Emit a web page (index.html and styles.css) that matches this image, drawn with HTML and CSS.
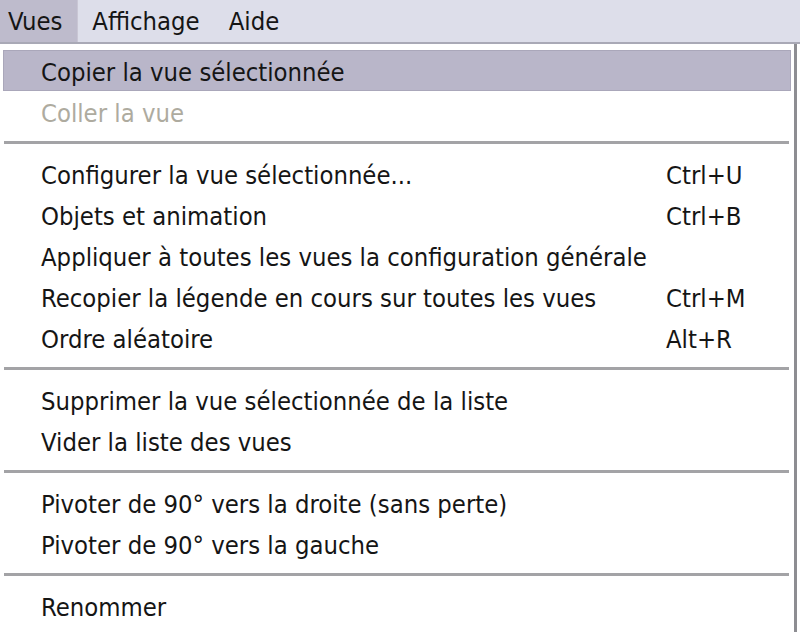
FILE: index.html
```html
<!DOCTYPE html>
<html lang="fr">
<head>
    <meta charset="UTF-8">
    <title>Menu Vues</title>
    <link rel="stylesheet" href="styles.css">
</head>
<body>
    <div class="menubar">
        <span class="menubar-item active">Vues</span>
        <span class="menubar-item">Affichage</span>
        <span class="menubar-item">Aide</span>
    </div>

    <div class="menu">
        <div class="menu-item selected"><span>Copier la vue sélectionnée</span><span class="shortcut"></span></div>
        <div class="menu-item disabled"><span>Coller la vue</span><span class="shortcut"></span></div>
        <div class="separator"></div>
        <div class="menu-item"><span>Configurer la vue sélectionnée...</span><span class="shortcut">Ctrl+U</span></div>
        <div class="menu-item"><span>Objets et animation</span><span class="shortcut">Ctrl+B</span></div>
        <div class="menu-item"><span>Appliquer à toutes les vues la configuration générale</span><span class="shortcut"></span></div>
        <div class="menu-item"><span>Recopier la légende en cours sur toutes les vues</span><span class="shortcut">Ctrl+M</span></div>
        <div class="menu-item"><span>Ordre aléatoire</span><span class="shortcut">Alt+R</span></div>
        <div class="separator"></div>
        <div class="menu-item"><span>Supprimer la vue sélectionnée de la liste</span><span class="shortcut"></span></div>
        <div class="menu-item"><span>Vider la liste des vues</span><span class="shortcut"></span></div>
        <div class="separator"></div>
        <div class="menu-item"><span>Pivoter de 90° vers la droite (sans perte)</span><span class="shortcut"></span></div>
        <div class="menu-item"><span>Pivoter de 90° vers la gauche</span><span class="shortcut"></span></div>
        <div class="separator"></div>
        <div class="menu-item"><span>Renommer</span><span class="shortcut"></span></div>
    </div>
</body>
</html>
```

FILE: styles.css
```css
:root {
    --bar-color: #dddeea;
    --select-color: #b9b6c9;
    --text-color: #151515;
    --disabled-color: #aeab9f;
}
body {
    margin: 0;
    font-family: 'DejaVu Sans Condensed', 'DejaVu Sans', sans-serif;
    font-size: 25.4px;
    color: var(--text-color);
    background-color: white;
}
.menubar {
    display: flex;
    height: 44px;
    background-color: var(--bar-color);
    border-bottom: 2px solid #a9a9b6;
    box-sizing: border-box;
}
.menubar-item {
    display: flex;
    align-items: center;
    padding: 0 15px 0 14px;
    line-height: 40px;
}
.menubar-item.active {
    padding-left: 8px;
    background-color: #bebbcc;
    border-right: 1px solid #c9c6d4;
}
.menu {
    width: 797px;
    box-sizing: border-box;
    padding: 6px 3px 6px 3px;
    border-right: 3px solid #8d8d92;
    background-color: white;
}
.menu-item {
    display: grid;
    grid-template-columns: 625px 1fr;
    align-items: center;
    height: 41px;
    padding-left: 38px;
    padding-top: 3px;
    box-sizing: border-box;
    white-space: nowrap;
}
.menu-item.selected {
    background-color: var(--select-color);
    border: 1px solid #aaa7ba;
    padding-left: 37px;
}
.menu-item.disabled {
    color: var(--disabled-color);
}
.separator {
    height: 3px;
    margin: 9px 2px 9px 1px;
    background-color: #a3a3a6;
}
```
